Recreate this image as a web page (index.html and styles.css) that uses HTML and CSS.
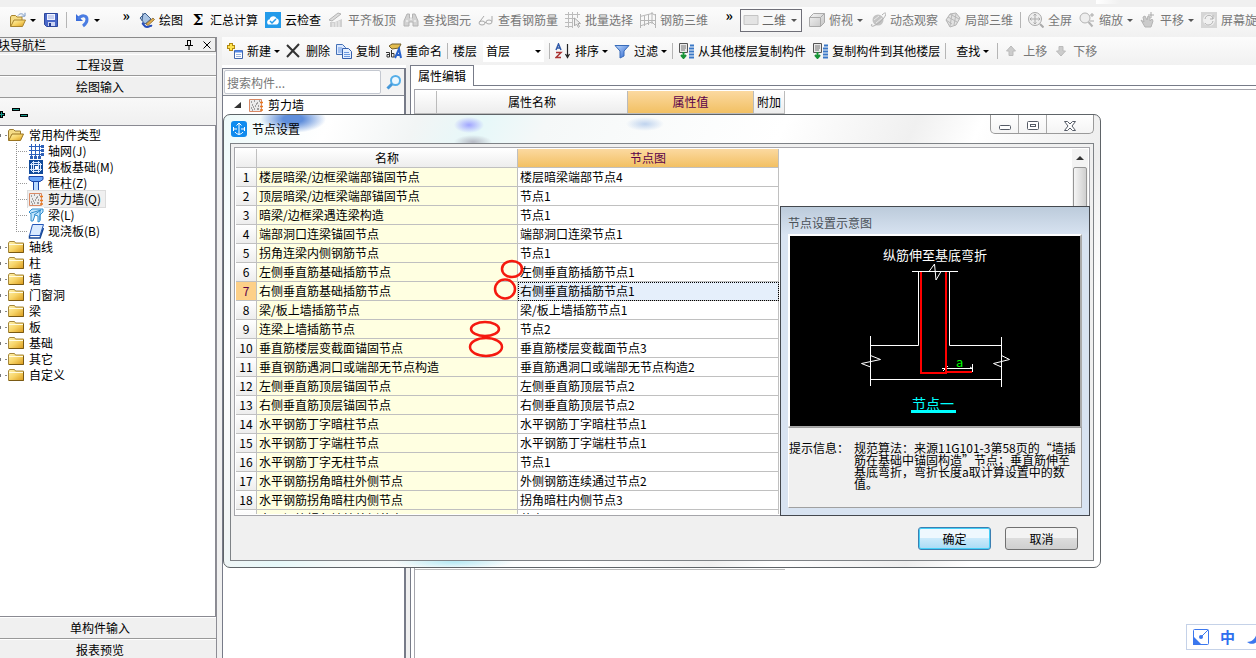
FILE: index.html
```html
<!DOCTYPE html>
<html lang="zh-CN">
<head>
<meta charset="utf-8">
<title>节点设置</title>
<link rel="stylesheet" href="styles.css">
</head>
<body>
<svg class="defs" aria-hidden="true">
  <defs>
    <linearGradient id="gold" x1="0" y1="0" x2="1" y2="1"><stop offset="0" stop-color="#fff3b0"/><stop offset=".5" stop-color="#f7d467"/><stop offset="1" stop-color="#d99a1c"/></linearGradient>
    <linearGradient id="blue" x1="0" y1="0" x2="1" y2="1"><stop offset="0" stop-color="#bcd8fb"/><stop offset="1" stop-color="#2a63cf"/></linearGradient>
    <linearGradient id="pale" x1="0" y1="0" x2="1" y2="1"><stop offset="0" stop-color="#f4f4f4"/><stop offset="1" stop-color="#c4c4c4"/></linearGradient>
    <symbol id="folder" viewBox="0 0 16 16"><path d="M.5 13.500V4l1-1.500h5l1 1.500h8v9.500z" fill="url(#gold)" stroke="#a5873c"/><path d="M1 5.500h14" stroke="#fffbe0"/><path d="M1 13.500h14.500V5" fill="none" stroke="#7a5a14"/></symbol>
    <symbol id="open" viewBox="0 0 16 16"><path d="M.5 13.500V4l1-1.500h4l1.500 1.500h5.500v3" fill="#f5dc86" stroke="#9a7a30"/><path d="M.7 13.500L4 7h11.500l-3 6.500z" fill="url(#gold)" stroke="#9a7420"/></symbol>
    <symbol id="openarrow" viewBox="0 0 16 16"><path d="M.5 14.500V5l1-1.500h4l1.500 1.500h5v3" fill="#f5dc86" stroke="#a8842f"/><path d="M.7 14.500L4 8h11.500l-3 6.500z" fill="url(#gold)" stroke="#a8842f"/><path d="M8 3.500c2-2.500 5-2 6 0M15 .8v3.400h-3.400" fill="none" stroke="#7797c4"/></symbol>
    <symbol id="save" viewBox="0 0 16 16"><path d="M1.500 1.500h13v13h-11l-2-2z" fill="#4a68c8" stroke="#2c479c"/><path d="M4 2h8v6H4z" fill="#f0f3ff"/><path d="M5 4h6M5 6h6" stroke="#a0aee0"/><path d="M5 10h7v4H5z" fill="#ccd4f2"/><path d="M6 11h2v3H6z" fill="#233d94"/></symbol>
    <symbol id="undo" viewBox="0 0 16 16"><path d="M2 2v7h7z" fill="#3a6ddb"/><path d="M4 7C8 2 13 3.500 13 7.500c0 3-2 5-4 6.500" fill="none" stroke="#4b7de2" stroke-width="3"/></symbol>
    <symbol id="paint" viewBox="0 0 16 16"><path d="M1 6l5-5 6 6-6 5z" fill="#a9c4e4" stroke="#3e5f8d"/><path d="M4 1l-1 8" stroke="#3e5f8d"/><path d="M3 11c2 1 2 4 5 4s3-2 5-1" fill="none" stroke="#244bba" stroke-width="2"/><path d="M7 12l7-6 1.500 1.500-6.500 6z" fill="#e3b050" stroke="#73531d" stroke-width=".7"/></symbol>
    <symbol id="cloud" viewBox="0 0 16 16"><path d="M0 0h16v16H0z" fill="#249bea"/><path d="M3 12.500c-2-3 0-5 1.500-5 1-4 6-4 7-1 3 0 3 5 .5 6z" fill="#fff"/><path d="M5 9l2 2 4-4" fill="none" stroke="#249bea" stroke-width="1.500"/></symbol>
    <symbol id="align" viewBox="0 0 16 16"><path d="M1 8l9-7 3 1-9 7z" fill="#ddd" stroke="#b4b4b4"/><path d="M2 10h5l7-3v8H2z" fill="#d0d0d0"/><path d="M5 11v4M8 10v5M11 9v6" stroke="#f2f2f2"/></symbol>
    <symbol id="bino" viewBox="0 0 16 16"><path d="M4 2h2.500v4h3V2H12l3 7v5h-5v-4H6v4H1V9z" fill="#d2d2d2" stroke="#b4b4b4"/><path d="M3 9h2M11 9h2M8 3v5" stroke="#fff"/></symbol>
    <symbol id="glasses" viewBox="0 0 16 16"><g fill="none" stroke="#aaa"><ellipse cx="4" cy="11" rx="3" ry="2"/><ellipse cx="11" cy="10" rx="3" ry="2"/><path d="M7 10.500h1M1.500 10L6 4M14 9.500V4"/></g></symbol>
    <symbol id="meshsel" viewBox="0 0 16 16"><path d="M0 2.500h15M0 6.500h9M0 10.500h8M0 14.500h8M3.500 0v16M7.500 0v16M12.500 0v6" stroke="#bcbcbc"/><path d="M9.500 6v8l2-2 2 3.500 1-1-1.500-3h2.500z" fill="#eee" stroke="#aaa"/></symbol>
    <symbol id="mesh" viewBox="0 0 16 16"><path d="M.5 2v14M4.500 4v10M8.500 2v11M12 0v12M15.500 2v14M0 4.500l12-3 4 2M0 8.500h16M0 14l12-4 4 4" fill="none" stroke="#b6b6b6"/></symbol>
    <symbol id="rect" viewBox="0 0 16 16"><path d="M1 3.500h14v9H1z" fill="#e4e4e4" stroke="#c4c4c4"/></symbol>
    <symbol id="cube" viewBox="0 0 16 16"><path d="M.5 5.500l4-4h11v9l-4 4H.5z" fill="url(#pale)" stroke="#aaa"/><path d="M.5 5.500h11v9M11.500 5.500l4-4" fill="none" stroke="#aaa"/></symbol>
    <symbol id="orbit" viewBox="0 0 16 16"><circle cx="8" cy="8" r="5.500" fill="#c3c3c3"/><path d="M2 12C-1 17 8 13 13 7s3-8-1-4" fill="none" stroke="#b0b0b0"/><path d="M4 8l5-4M6 11l6-5" stroke="#e9e9e9"/></symbol>
    <symbol id="local" viewBox="0 0 16 16"><path d="M1 8l4-6 6-1 4 5-4 7-6 2z" fill="#e2e2e2" stroke="#b4b4b4"/><path d="M3 5l9 5M1 8l6 4M5 2l9 5M7 2L5 14M11 2L9 13" stroke="#b9b9b9"/></symbol>
    <symbol id="full" viewBox="0 0 16 16"><circle cx="7" cy="7" r="6.500" fill="#eee" stroke="#aaa"/><path d="M7 2v10M2 7h10M5.500 3.500L7 2l1.500 1.500M5.500 10.500L7 12l1.500-1.500M3.500 5.500L2 7l1.500 1.500M10.500 5.500L12 7l-1.500 1.500" fill="none" stroke="#aaa"/><path d="M12 12l3.500 3.500" stroke="#aaa" stroke-width="2"/></symbol>
    <symbol id="zoomer" viewBox="0 0 16 16"><circle cx="6" cy="6" r="5" fill="#eee" stroke="#b4b4b4"/><path d="M9.500 10l4 4.500" stroke="#b4b4b4" stroke-width="2"/><path d="M11 3h4M13 1v4M11 9h4" stroke="#aaa"/></symbol>
    <symbol id="hand" viewBox="0 0 16 16"><path d="M1 8l3 2-1-5 2-1 2 4 1-4 2 1v4l2-2 1 2-2 6H5z" fill="#cbcbcb" stroke="#b4b4b4"/><path d="M11 0v6M8 3h6" stroke="#aaa"/></symbol>
    <symbol id="rotate" viewBox="0 0 16 16"><path d="M0 0h16v16H0z" fill="#d6d6d6"/><circle cx="8" cy="8" r="6" fill="#f0f0f0"/><path d="M4 7c1-5 7-5 8 0M12 9c-1 5-7 5-8 2M12 3v4H9" fill="none" stroke="#b0b0b0"/></symbol>
    <symbol id="new" viewBox="0 0 16 16"><path d="M4 0v8M0 4h8" stroke="#b28a13" stroke-width="4"/><path d="M4 1v6M1 4h6" stroke="#ffe34f" stroke-width="2"/><path d="M7.500 7.500h8v8h-8z" fill="#fff" stroke="#4267ad"/><path d="M8 8.500h7" stroke="#4f86e8" stroke-width="2"/><path d="M9 11.500h5M9 13.500h5" stroke="#9ab3dd"/></symbol>
    <symbol id="del" viewBox="0 0 16 16"><path d="M1 2l12 12M13 1L1 14" fill="none" stroke="#333" stroke-width="2"/></symbol>
    <symbol id="copy" viewBox="0 0 16 16"><path d="M.5 1.500h6l3 3v7h-9z" fill="#dce9ff" stroke="#4470b6"/><path d="M6.500 5.500h6l3 3v7h-9z" fill="#e4efff" stroke="#345eab"/><path d="M2 5h4M2 7h4M2 9h4M8 9.500h5M8 11.500h6M8 13.500h6" stroke="#6b98df"/></symbol>
    <symbol id="rename" viewBox="0 0 16 16"><path d="M3 3l3-2h9l-2 4-7 1z" fill="#e3bd4f" stroke="#74602d"/><path d="M9 15l4-9 2 9M10 12h5" fill="none" stroke="#2862cc" stroke-width="2"/><path d="M0 9.500h3.500V14H1v-2.500h2M5.500 7v7H8v-3.500H6" fill="none" stroke="#333"/></symbol>
    <symbol id="sort" viewBox="0 0 16 16"><path d="M1 7l2.500-6L6 7M2 5h3" fill="none" stroke="#3059a8" stroke-width="1.500"/><path d="M1 9.500h5l-5 5h5" fill="none" stroke="#a33" stroke-width="1.500"/><path d="M12.500 1v12M10.500 11l2 3.500 2-3.500" fill="none" stroke="#222" stroke-width="1.200"/></symbol>
    <symbol id="filter" viewBox="0 0 16 16"><path d="M1 2.500h14L10 8v5l-4 2V8z" fill="url(#blue)" stroke="#386bb9"/></symbol>
    <symbol id="floor" viewBox="0 0 16 16"><path d="M1.500.5h8v9h-8z" fill="#e9e9e9" stroke="#555"/><path d="M3 3h5M3 5h5M3 7h4" stroke="#777"/><path d="M5.500 9v5M3 12l2.500 3L8 12" fill="none" stroke="#189337" stroke-width="2"/><path d="M12 2.500h4M11 5.500h5M11 8.500h5M11 11.500h5M11 14.500h5" stroke="#3a78c7" stroke-width="2"/></symbol>
    <symbol id="up" viewBox="0 0 12 12"><path d="M6 1l4.500 5H8v4.500H4V6H1.500z" fill="#ccc" stroke="#bbb"/></symbol>
    <symbol id="down" viewBox="0 0 12 12"><path d="M6 11l4.500-5H8V1.500H4V6H1.500z" fill="#ccc" stroke="#bbb"/></symbol>
    <symbol id="wall" viewBox="0 0 16 16"><path d="M1.500 2.500h12v12h-12z" fill="#ececec" stroke="#d98965"/><path d="M3 5h1M6 4h1M9 6h1M4 8h1M7 9h1M10 9h1M3 11h1M6 12h1M9 12h2M11 4h1M5 10h1M8 7h1M4 13h1" stroke="#555"/><path d="M12 5.500h3M12 9.500h3M12 13h3" stroke="#e8791e" stroke-width="1.500"/></symbol>
    <symbol id="axis" viewBox="0 0 16 16"><path d="M3.500 1v14M7.500 1v14M11.500 1v14M1 3.500h14M1 7.500h14M1 11.500h14" stroke="#2c61bd"/><path d="M13 2h3v3h-3zM13 6h3v3h-3zM13 10h3v3h-3zM2 13h3v3H2zM6 13h3v3H6zM10 13h3v3h-3z" fill="#2f61b7"/></symbol>
    <symbol id="raft" viewBox="0 0 16 16"><path d="M1 1h14v14H1z" fill="#114b9b"/><path d="M4 3.500h8M4 12.500h8M3.500 4v8M12.500 4v8M5.500 2v12M10.500 2v12M2 5.500h12M2 10.500h12" fill="none" stroke="#dcebff"/><path d="M7 7h3v3H7z" fill="#fff"/></symbol>
    <symbol id="column" viewBox="0 0 16 16"><path d="M1 1.500h14v3l-3 2H4l-3-2z" fill="#6aa7fa" stroke="#1742a6"/><path d="M5.500 6.500h5v9h-5z" fill="#b9d9ff" stroke="#1742a6"/></symbol>
    <symbol id="beam" viewBox="0 0 16 16"><path d="M1 5l3-3h11v3l-3 3v6l-2 1V9L7 8l-2 6H3V7z" fill="#c3e5fc" stroke="#318dce"/><path d="M3 6l10-3M6 8l7-5M12 3v10" stroke="#318dce"/></symbol>
    <symbol id="slab" viewBox="0 0 16 16"><path d="M4.500 1.500h11l-3.500 11H1.500z" fill="#d9eaff" stroke="#2457b8"/><path d="M1.500 12.500v2.500H12l3.500-10" fill="none" stroke="#164797" stroke-width="1.500"/></symbol>
    <symbol id="search" viewBox="0 0 16 16"><circle cx="9.500" cy="6.500" r="4.500" fill="#edf8ff" stroke="#55aee8" stroke-width="2"/><path d="M6 10l-4.500 4.500" stroke="#4698d9" stroke-width="3"/></symbol>
  </defs>
</svg>

<div class="app">
  <header class="bar bar-main">
    <div class="group group-file">
      <button class="tool" aria-label="打开"><svg class="ico"><use href="#openarrow"/></svg><i class="caret"></i></button>
      <button class="tool" aria-label="保存"><svg class="ico"><use href="#save"/></svg></button>
      <span class="sep"></span>
      <button class="tool" aria-label="撤销"><svg class="ico"><use href="#undo"/></svg><i class="caret"></i></button>
      <span class="more">»</span>
    </div>
    <div class="group group-draw">
      <button class="tool"><svg class="ico"><use href="#paint"/></svg>绘图</button>
      <button class="tool"><b class="ico sigma">Σ</b>汇总计算</button>
      <button class="tool"><svg class="ico"><use href="#cloud"/></svg>云检查</button>
      <button class="tool off"><svg class="ico"><use href="#align"/></svg>平齐板顶</button>
      <button class="tool off"><svg class="ico"><use href="#bino"/></svg>查找图元</button>
      <button class="tool off"><svg class="ico"><use href="#glasses"/></svg>查看钢筋量</button>
      <button class="tool off"><svg class="ico"><use href="#meshsel"/></svg>批量选择</button>
      <button class="tool off"><svg class="ico"><use href="#mesh"/></svg>钢筋三维</button>
      <span class="more">»</span>
    </div>
    <div class="group group-view">
      <div class="combo combo-view"><svg class="ico"><use href="#rect"/></svg><select aria-label="视图"><option>二维</option></select><i class="caret"></i></div>
      <button class="tool off"><svg class="ico"><use href="#cube"/></svg>俯视<i class="caret"></i></button>
      <button class="tool off"><svg class="ico"><use href="#orbit"/></svg>动态观察</button>
      <button class="tool off"><svg class="ico"><use href="#local"/></svg>局部三维</button>
      <span class="sep"></span>
      <button class="tool off"><svg class="ico"><use href="#full"/></svg>全屏</button>
      <button class="tool off"><svg class="ico"><use href="#zoomer"/></svg>缩放<i class="caret"></i></button>
      <button class="tool off"><svg class="ico"><use href="#hand"/></svg>平移<i class="caret"></i></button>
      <button class="tool off"><svg class="ico"><use href="#rotate"/></svg>屏幕旋转</button>
    </div>
  </header>

  <div class="body">
    <aside class="nav">
      <div class="nav-head"><span class="nav-title">块导航栏</span>
        <button class="mini" aria-label="固定"><svg viewBox="0 0 8 10"><path d="M2 .5h4M2.500 0v5M5.500 0v5M0 5.500h8M4 6v4" stroke="#000" fill="none"/></svg></button>
        <button class="mini" aria-label="关闭"><svg viewBox="0 0 8 10"><path d="M.5 1.500l7 7M7.500 1.500l-7 7" stroke="#000" fill="none"/></svg></button>
      </div>
      <button class="nav-btn">工程设置</button>
      <button class="nav-btn">绘图输入</button>
      <div class="nav-tools"><svg viewBox="0 0 32 14"><path d="M0 8.500h5M1.500 5v7M12 3.500h8M20 9.500h8" stroke="#000" stroke-width="3"/><path d="M0 8.500h4M1.500 6v5M13 3.500h6M21 9.500h6" stroke="#169a8c"/></svg></div>
      <ul class="tree">
        <li class="node root"><svg class="ico"><use href="#open"/></svg>常用构件类型
          <ul class="kids">
            <li class="leaf"><svg class="ico"><use href="#axis"/></svg><span>轴网(J)</span></li>
            <li class="leaf"><svg class="ico"><use href="#raft"/></svg><span>筏板基础(M)</span></li>
            <li class="leaf"><svg class="ico"><use href="#column"/></svg><span>框柱(Z)</span></li>
            <li class="leaf picked"><svg class="ico"><use href="#wall"/></svg><span>剪力墙(Q)</span></li>
            <li class="leaf"><svg class="ico"><use href="#beam"/></svg><span>梁(L)</span></li>
            <li class="leaf"><svg class="ico"><use href="#slab"/></svg><span>现浇板(B)</span></li>
          </ul>
        </li>
        <li class="node"><svg class="ico"><use href="#folder"/></svg>轴线</li>
        <li class="node"><svg class="ico"><use href="#folder"/></svg>柱</li>
        <li class="node"><svg class="ico"><use href="#folder"/></svg>墙</li>
        <li class="node"><svg class="ico"><use href="#folder"/></svg>门窗洞</li>
        <li class="node"><svg class="ico"><use href="#folder"/></svg>梁</li>
        <li class="node"><svg class="ico"><use href="#folder"/></svg>板</li>
        <li class="node"><svg class="ico"><use href="#folder"/></svg>基础</li>
        <li class="node"><svg class="ico"><use href="#folder"/></svg>其它</li>
        <li class="node"><svg class="ico"><use href="#folder"/></svg>自定义</li>
      </ul>
      <button class="nav-btn">单构件输入</button>
      <button class="nav-btn nav-last">报表预览</button>
    </aside>

    <main class="work">
      <div class="bar bar-edit">
        <button class="tool"><svg class="ico"><use href="#new"/></svg>新建<i class="caret"></i></button>
        <button class="tool"><svg class="ico"><use href="#del"/></svg>删除</button>
        <button class="tool"><svg class="ico"><use href="#copy"/></svg>复制</button>
        <button class="tool"><svg class="ico"><use href="#rename"/></svg>重命名</button>
        <span class="sep"></span>
        <label class="floor-label" for="floor-pick">楼层</label>
        <div class="combo combo-floor"><select id="floor-pick"><option>首层</option></select><i class="caret"></i></div>
        <span class="sep"></span>
        <button class="tool"><svg class="ico"><use href="#sort"/></svg>排序<i class="caret"></i></button>
        <button class="tool"><svg class="ico"><use href="#filter"/></svg>过滤<i class="caret"></i></button>
        <span class="sep"></span>
        <button class="tool"><svg class="ico"><use href="#floor"/></svg>从其他楼层复制构件</button>
        <button class="tool"><svg class="ico"><use href="#floor"/></svg>复制构件到其他楼层</button>
        <span class="sep"></span>
        <button class="tool tool-find">查找<i class="caret"></i></button>
        <span class="sep"></span>
        <button class="tool move off"><svg class="ico small"><use href="#up"/></svg>上移</button>
        <button class="tool move off"><svg class="ico small"><use href="#down"/></svg>下移</button>
      </div>
      <div class="panes">
        <section class="parts">
          <div class="find"><input type="text" placeholder="搜索构件..." aria-label="搜索构件"><button aria-label="搜索"><svg class="ico"><use href="#search"/></svg></button></div>
          <div class="part-list"><div class="part"><i class="fold"></i><svg class="ico"><use href="#wall"/></svg><span>剪力墙</span></div><div class="part-row"></div></div>
        </section>
        <section class="props">
          <div class="tabs"><button class="tab">属性编辑</button></div>
          <div class="prop-body">
            <table class="prop-table">
              <thead><tr><th class="p-no"></th><th class="p-name">属性名称</th><th class="p-val">属性值</th><th class="p-add">附加</th></tr></thead>
              <tbody><tr><td></td><td></td><td></td><td></td></tr></tbody>
            </table>
          </div>
        </section>
      </div>
    </main>
  </div>
</div>

<section class="dialog" role="dialog" aria-labelledby="dlg-title">
  <div class="dlg-bar">
    <svg class="dlg-ico" viewBox="0 0 16 16"><rect width="16" height="16" rx="3" fill="#108bee"/><path d="M8 2v12M5.500 4.500L8 2l2.500 2.500M2.500 6v4M2.500 8H6M10 8h3.500M13.500 6v4M4 11c2 3 6 3 8 0" fill="none" stroke="#fff"/></svg>
    <h1 id="dlg-title">节点设置</h1>
    <div class="win-btns">
      <button aria-label="最小化"><svg viewBox="0 0 14 12"><rect x="1.500" y="5.500" width="11" height="4" rx="1" fill="#fff" stroke="#555b66"/></svg></button>
      <button aria-label="最大化"><svg viewBox="0 0 14 12"><rect x="1.500" y="1.500" width="11" height="8" rx="1" fill="#fff" stroke="#555b66"/><rect x="4.500" y="4.500" width="5" height="2" fill="#fff" stroke="#555b66"/></svg></button>
      <button class="win-x" aria-label="关闭"><svg viewBox="0 0 14 12"><path d="M1.500 1.500h3L7 4l2.500-2.500h3L9 6l3.500 4.500h-3L7 8l-2.500 2.500h-3L5 6z" fill="#fff" stroke="#555b66"/></svg></button>
    </div>
  </div>
  <div class="client">
    <div class="grid-box">
      <div class="grid-view">
        <table class="nodes">
          <thead><tr><th class="n-no"></th><th class="n-name">名称</th><th class="n-pic">节点图</th></tr></thead>
          <tbody>
            <tr><th>1</th><td>楼层暗梁/边框梁端部锚固节点</td><td>楼层暗梁端部节点4</td></tr>
            <tr><th>2</th><td>顶层暗梁/边框梁端部锚固节点</td><td>节点1</td></tr>
            <tr><th>3</th><td>暗梁/边框梁遇连梁构造</td><td>节点1</td></tr>
            <tr><th>4</th><td>端部洞口连梁锚固节点</td><td>端部洞口连梁节点1</td></tr>
            <tr><th>5</th><td>拐角连梁内侧钢筋节点</td><td>节点1</td></tr>
            <tr><th>6</th><td>左侧垂直筋基础插筋节点</td><td>左侧垂直筋插筋节点1</td></tr>
            <tr class="current"><th>7</th><td>右侧垂直筋基础插筋节点</td><td>右侧垂直筋插筋节点1</td></tr>
            <tr><th>8</th><td>梁/板上墙插筋节点</td><td>梁/板上墙插筋节点1</td></tr>
            <tr><th>9</th><td>连梁上墙插筋节点</td><td>节点2</td></tr>
            <tr><th>10</th><td>垂直筋楼层变截面锚固节点</td><td>垂直筋楼层变截面节点3</td></tr>
            <tr><th>11</th><td>垂直钢筋遇洞口或端部无节点构造</td><td>垂直筋遇洞口或端部无节点构造2</td></tr>
            <tr><th>12</th><td>左侧垂直筋顶层锚固节点</td><td>左侧垂直筋顶层节点2</td></tr>
            <tr><th>13</th><td>右侧垂直筋顶层锚固节点</td><td>右侧垂直筋顶层节点2</td></tr>
            <tr><th>14</th><td>水平钢筋丁字暗柱节点</td><td>水平钢筋丁字暗柱节点1</td></tr>
            <tr><th>15</th><td>水平钢筋丁字端柱节点</td><td>水平钢筋丁字端柱节点1</td></tr>
            <tr><th>16</th><td>水平钢筋丁字无柱节点</td><td>节点1</td></tr>
            <tr><th>17</th><td>水平钢筋拐角暗柱外侧节点</td><td>外侧钢筋连续通过节点2</td></tr>
            <tr><th>18</th><td>水平钢筋拐角暗柱内侧节点</td><td>拐角暗柱内侧节点3</td></tr>
            <tr><th></th><td>水平钢筋拐角端柱外侧节点</td><td>节点3</td></tr>
          </tbody>
        </table>
        <div class="scroll"><i class="scroll-up"></i><i class="thumb"></i></div>
      </div>
      <svg class="marks" viewBox="0 0 40 100" aria-hidden="true"><g fill="none" stroke="#f5190f" stroke-width="2.500"><ellipse cx="44" cy="10" rx="10" ry="8"/><ellipse cx="37" cy="30" rx="10" ry="9.500"/><ellipse cx="17" cy="70" rx="14" ry="7"/><ellipse cx="18" cy="88" rx="16" ry="9"/></g></svg>
      <aside class="preview">
        <h2>节点设置示意图</h2>
        <div class="drawing">
          <svg viewBox="0 0 290 190">
            <g fill="none" stroke="#fff"><path d="M122 35.500h46M139 35.500l5.500-7.500 1.500 16 5-8.500M128.500 35v74.500h-48M159.500 35v74.500h52M80.500 100v50M80.500 119.500l10 4-19 4 9 3.500M211.500 101v50M211.500 119.500l8 4-16 4 8 3.500M80.500 143.500h131M152 132.500h31M153 135l5-5M182.500 128v8M180 131l3 2"/></g>
            <path d="M131 36v101h25V36M156 136h26" fill="none" stroke="#f00" stroke-width="2"/>
            <text class="cad" x="93" y="24" fill="#fff">纵筋伸至基底弯折</text>
            <text class="cad" x="166" y="131" fill="#0f0">a</text>
            <text class="cad cad-big" x="122" y="173" fill="#0ff">节点一</text>
            <path d="M121 175.500h45" stroke="#0ff" stroke-width="3"/>
          </svg>
        </div>
        <dl class="tip"><dt>提示信息：</dt><dd>规范算法：来源11G101-3第58页的“墙插<br>筋在基础中锚固构造”节点；垂直筋伸至<br>基底弯折，弯折长度a取计算设置中的数<br>值。</dd></dl>
      </aside>
    </div>
    <footer class="actions"><button class="btn primary">确定</button><button class="btn">取消</button></footer>
  </div>
</section>

<div class="ime">
  <svg viewBox="0 0 16 16"><rect x=".5" y=".5" width="15" height="15" rx="1" fill="#fff" stroke="#3b77ee"/><path d="M0 7l9 9H0z" fill="#3b77ee"/><path d="M8 8l7-7" stroke="#3b77ee"/><circle cx="8" cy="8" r="2" fill="#3b77ee"/></svg>
  <b>中</b>
  <svg viewBox="0 0 16 16"><path d="M11 1c6 8-2 18-10 12 6 0 10-5 10-12z" fill="#3b77ee"/></svg>
</div>
</body>
</html>
```
FILE: styles.css
```css
* { box-sizing: border-box; }
html, body { height: 100%; }
body {
  margin: 0;
  overflow: hidden;
  background: #fff;
  color: #000;
  font: 12px/16px "Noto Sans CJK SC", sans-serif;
}
button, input, select { font: inherit; color: inherit; }
button { padding: 0; border: 0; background: none; white-space: nowrap; }
ul, dl, dd, h1, h2 { margin: 0; padding: 0; list-style: none; font-size: 12px; font-weight: 400; }
.defs { position: absolute; width: 0; height: 0; }
.ico { flex: none; width: 16px; height: 16px; }
.small { width: 12px; height: 12px; }

.app {
  display: flex;
  flex-direction: column;
  height: 100%;
  padding-top: 7px;
  background: linear-gradient(90deg, #fff, #f0f0f0) 1096px 0 / 24px 4px no-repeat, #f0f0f0;
}

/* toolbars */
.bar { display: flex; align-items: center; background: linear-gradient(#fcfcfc, #f1f1f1); }
.bar-main { flex: none; height: 30px; overflow: hidden; padding-bottom: 4px; }
.group { display: flex; flex: none; align-items: center; gap: 7px; height: 100%; }
.group-file { width: 135px; padding-left: 10px; }
.group-draw { width: 603px; padding-left: 4px; }
.group-view { padding-left: 2px; }
.tool { display: flex; flex: none; align-items: center; gap: 4px; height: 22px; }
.off { color: #777; }
.caret { flex: none; border: 3px solid transparent; border-top-color: #000; border-bottom: 0; }
.off .caret, .combo-view .caret { border-top-color: #555; }
.sep { flex: none; width: 1px; height: 16px; background: #b5b5b5; }
.more { align-self: flex-start; margin-left: auto; padding-right: 5px; font-weight: 700; font-size: 14px; line-height: 16px; }
.sigma { font: 700 15px/16px "DejaVu Serif", serif; text-align: center; }
.combo { display: flex; align-items: center; background: #fff; }
.combo select { flex: 1; min-width: 0; border: 0; padding: 0; appearance: none; background: none; }
.combo-view { width: 62px; height: 23px; padding: 0 4px 0 2px; gap: 3px; border: 1px solid #6f6f78; color: #666; background: #f8f8f8; }
.combo-floor { width: 61px; height: 22px; padding: 0 3px; }
.bar-edit { flex: none; height: 28px; padding-left: 5px; gap: 6px; overflow: hidden; }
.bar-edit .sep { margin: 0 -1px; }
.bar-edit .tool .caret { margin-left: -1px; }
.bar-edit .tool-find { margin: 0 3px 0 5px; }
.bar-edit .move { gap: 6px; margin-left: 2px; }
.floor-label { flex: none; }

.body { display: flex; flex: 1; min-height: 0; }

/* module navigation */
.nav { display: flex; flex: none; flex-direction: column; width: 217px; margin-right: 5px; border-right: 1px solid #8d8d95; overflow: hidden; }
.nav-head { display: flex; flex: none; align-items: center; gap: 10px; height: 15px; margin-bottom: 2px; padding-right: 4px; border: 1px solid #8a8a8a; border-left: 0; overflow: hidden; }
.nav-title { flex: 1; margin-left: -2px; }
.mini { width: 8px; height: 10px; }
.mini svg { display: block; width: 8px; height: 10px; }
.nav-btn { flex: none; height: 22px; border-top: 1px solid #fff; border-bottom: 1px solid #999; padding-right: 16px; }
.nav-last { margin-bottom: -3px; }
.nav-tools { flex: none; height: 27px; padding-top: 8px; background: linear-gradient(#f8f8f8, #f0f0f0); }
.nav-tools svg { display: block; width: 32px; height: 14px; }
.tree { flex: 1; min-height: 0; padding-top: 1px; overflow: hidden; background: #fff; border: 1px solid #8a8a92; border-left: 0; line-height: 16px; }
.node { padding-left: 8px; background: linear-gradient(#888, #888) 5px 8px / 2px 1px no-repeat, linear-gradient(#777, #777) 0 7px / 1px 3px no-repeat; }
.node > .ico, .leaf > .ico { vertical-align: top; background: #fff; }
.node > .ico { margin-right: 5px; }
.kids { margin-left: 8px; background: repeating-linear-gradient(#888 0 1px, transparent 1px 2px) 0 0 / 1px 88px no-repeat; }
.leaf { display: flex; height: 16px; padding-left: 12px; background: linear-gradient(90deg, #999 50%, transparent 50%) 0 8px / 2px 1px repeat-x; }
.leaf span { flex: none; padding-left: 4px; padding-right: 4px; background: #fff; }
.leaf::after { content: ""; flex: 1; background: #fff; }
.leaf.picked span, .leaf.picked .ico { background: #f0f0f0; box-shadow: 0 0 0 1px #dcdcdc; }
.leaf.picked span { clip-path: inset(-1px -1px -1px 0); }

/* component list and properties */
.work { display: flex; flex: 1; flex-direction: column; min-width: 0; }
.panes { display: flex; flex: 1; min-height: 0; background: #fff; }
.parts { flex: none; display: flex; flex-direction: column; width: 184px; margin-top: 3px; border: 1px solid #777b88; border-right-width: 2px; border-bottom: 0; }
.find { display: flex; flex: none; align-items: center; height: 26px; padding-left: 1px; background: #f3f3f3; gap: 5px; }
.find input { width: 157px; height: 24px; padding: 0 2px; border: 1px solid #c4c8d0; background: #fff; border-radius: 2px; }
.find input::placeholder { color: #777; opacity: 1; }
.find button { height: 16px; }
.part-list { flex: 1; border-top: 1px solid #858993; background: #fff; padding-left: 11px; }
.part { display: flex; align-items: center; gap: 4px; height: 18px; }
.fold { border-left: 7px solid transparent; border-bottom: 6px solid #333; margin-right: 3px; }
.part-row { width: 58px; height: 16px; margin-left: 30px; background: #2d64bf; }
.props { display: flex; flex: 1; flex-direction: column; min-width: 0; margin-left: 4px; border-left: 1px solid #777b88; box-shadow: -4px 0 #efefef; }
.tabs { flex: none; height: 21px; border-bottom: 1px solid #777b88; }
.tab { width: 63px; height: 21px; padding-bottom: 1px; border: 1px solid #777b88; border-left: 0; border-bottom: 0; background: #fff; }
.prop-body { flex: 1; margin: 3px 0 0 3px; border-top: 1px solid #a5a5ac; border-left: 1px solid #a5a5ac; padding-top: 1px; }
.prop-table { width: 370px; table-layout: fixed; border-collapse: separate; border-spacing: 0; }
.prop-table th { height: 23px; padding: 0; font-weight: 400; background: linear-gradient(#fff, #ededed); border-right: 1px solid #bbb; border-bottom: 1px solid #bbb; }
.prop-table td { height: 456px; padding: 0; border-bottom: 1px solid #bbb; }
.p-no { width: 22px; }
.p-name { width: 191px; }
.p-val { width: 126px; }
.prop-table .p-val, .nodes .n-pic { color: #5a0048; background: linear-gradient(#fbd9a0, #f2c063); }

/* node settings window */
.dialog {
  position: absolute;
  inset: 114px 155px 90px 223px;
  display: flex;
  flex-direction: column;
  padding: 0 6px 6px;
  border: 1px solid #5f6468;
  border-radius: 7px;
  background:
    radial-gradient(closest-side, #5f8edb 30%, transparent) 36px -10px / 66px 28px no-repeat,
    radial-gradient(closest-side, #a0a5ff, transparent) 230px 2px / 30px 16px no-repeat,
    radial-gradient(closest-side, #b6b9c4, transparent) 230px 20px / 38px 14px no-repeat,
    radial-gradient(closest-side, #bfd3ee, transparent) 402px 2px / 38px 14px no-repeat,
    radial-gradient(closest-side, #b5e9f4, transparent) 170px 440px / 120px 14px no-repeat,
    linear-gradient(115deg, #eefafa 0, #fff 10%, #f2f5f5 18%, #e6f8f9 24%, #f5f8f8 30%, #fff 52%, #f0f0f0 64%, #fff 70%, #eee 82%, #fff 88%);
}
.dlg-bar { display: flex; flex: none; align-items: center; gap: 5px; height: 28px; padding-left: 1px; }
.dlg-ico { width: 16px; height: 16px; }
.win-btns { display: flex; align-self: flex-start; margin-left: auto; height: 19px; border: 1px solid #9a9a9a; border-top: 0; border-radius: 0 0 5px 5px; background: linear-gradient(#fff, #f4f4f4); }
.win-btns button { width: 28px; padding: 3px 0 0; border-right: 1px solid #aaa; }
.win-btns .win-x { width: 46px; border: 0; }
.win-btns svg { display: block; width: 14px; height: 12px; margin: auto; }
.client { display: flex; flex: 1; flex-direction: column; min-height: 0; padding: 3px 3px 0; background: #f0f0f0; border: 1px solid #7e8286; }
.grid-box { position: relative; flex: 1; min-height: 0; padding: 1px; border: 1px solid #a5a5aa; background: #fff; }
.grid-view { display: flex; justify-content: space-between; height: 100%; overflow: hidden; }
.nodes { flex: none; width: 543px; table-layout: fixed; border-collapse: separate; border-spacing: 0; align-self: flex-start; }
.nodes th, .nodes td { height: 19px; padding: 0; font-weight: 400; line-height: 16px; border-right: 1px solid #c0c0c0; border-bottom: 1px solid #c0c0c0; white-space: nowrap; }
.nodes td { padding-left: 2px; }
.nodes th { background: linear-gradient(#fff, #ededed); }
.n-no { width: 21px; }
.n-name { width: 261px; }
.nodes td:nth-child(2) { background: #ffffe1; }
.nodes .current th { background: #fdd088; color: #5a0048; }
.nodes .current td:last-child { background: #e5effb; outline: 1px dotted #000; outline-offset: -1px; }
.scroll { flex: none; width: 16px; background: #f3f3f3; }
.scroll-up { display: flex; align-items: center; justify-content: center; height: 18px; }
.scroll-up::before { content: ""; border: 4px solid transparent; border-top: 0; border-bottom-color: #333; }
.thumb { display: block; height: 100px; margin: 0 1px; border: 1px solid #959595; border-radius: 2px; background: linear-gradient(90deg, #f5f5f5, #cfcfcf); }
.marks { position: absolute; left: 233px; top: 111px; width: 40px; height: 100px; overflow: visible; }

/* schematic preview */
.preview { position: absolute; right: -1px; bottom: -1px; display: flex; flex-direction: column; width: 310px; height: 310px; padding: 0 7px 7px; border: 1px solid #44484e; background: linear-gradient(#bccbdb, #d8e3f1 28px); }
.preview h2 { flex: none; height: 27px; line-height: 32px; color: #4a5158; }
.drawing { flex: none; border: solid; border-width: 2px 2px 1px 2px; border-color: #fff #aaa #aaa #fff; background: #000; }
.drawing svg { display: block; width: 100%; }
.cad { font: 13px "Noto Sans CJK SC", sans-serif; }
.cad-big { font-size: 14px; }
.tip { display: flex; flex: 1; padding-top: 14px; background: #f0f0f0; border: 1px solid #a0a0a0; border-left-color: #fff; line-height: 12px; white-space: nowrap; }
.tip dt { width: 65px; }
.actions { display: flex; flex: none; justify-content: flex-end; gap: 14px; height: 44px; padding: 11px 12px 0 0; }
.btn { width: 73px; height: 23px; border: 1px solid #707070; border-radius: 3px; background: linear-gradient(#f3f3f3 50%, #dcdcdc 50%, #cfcfcf); }
.primary { border-color: #3c7fb1; background: linear-gradient(#eef8fe 50%, #cbeafb 50%, #a9dbf5); box-shadow: inset 0 0 0 1px #45d0f8; }

/* input method strip */
.ime { position: absolute; right: 0; bottom: 8px; display: flex; align-items: center; gap: 11px; width: 70px; height: 26px; padding-left: 6px; overflow: hidden; background: #fff; border: 1px solid #c5d2e8; border-right: 0; color: #2f6fee; font-size: 15px; }
.ime svg { flex: none; width: 16px; height: 16px; }
```
